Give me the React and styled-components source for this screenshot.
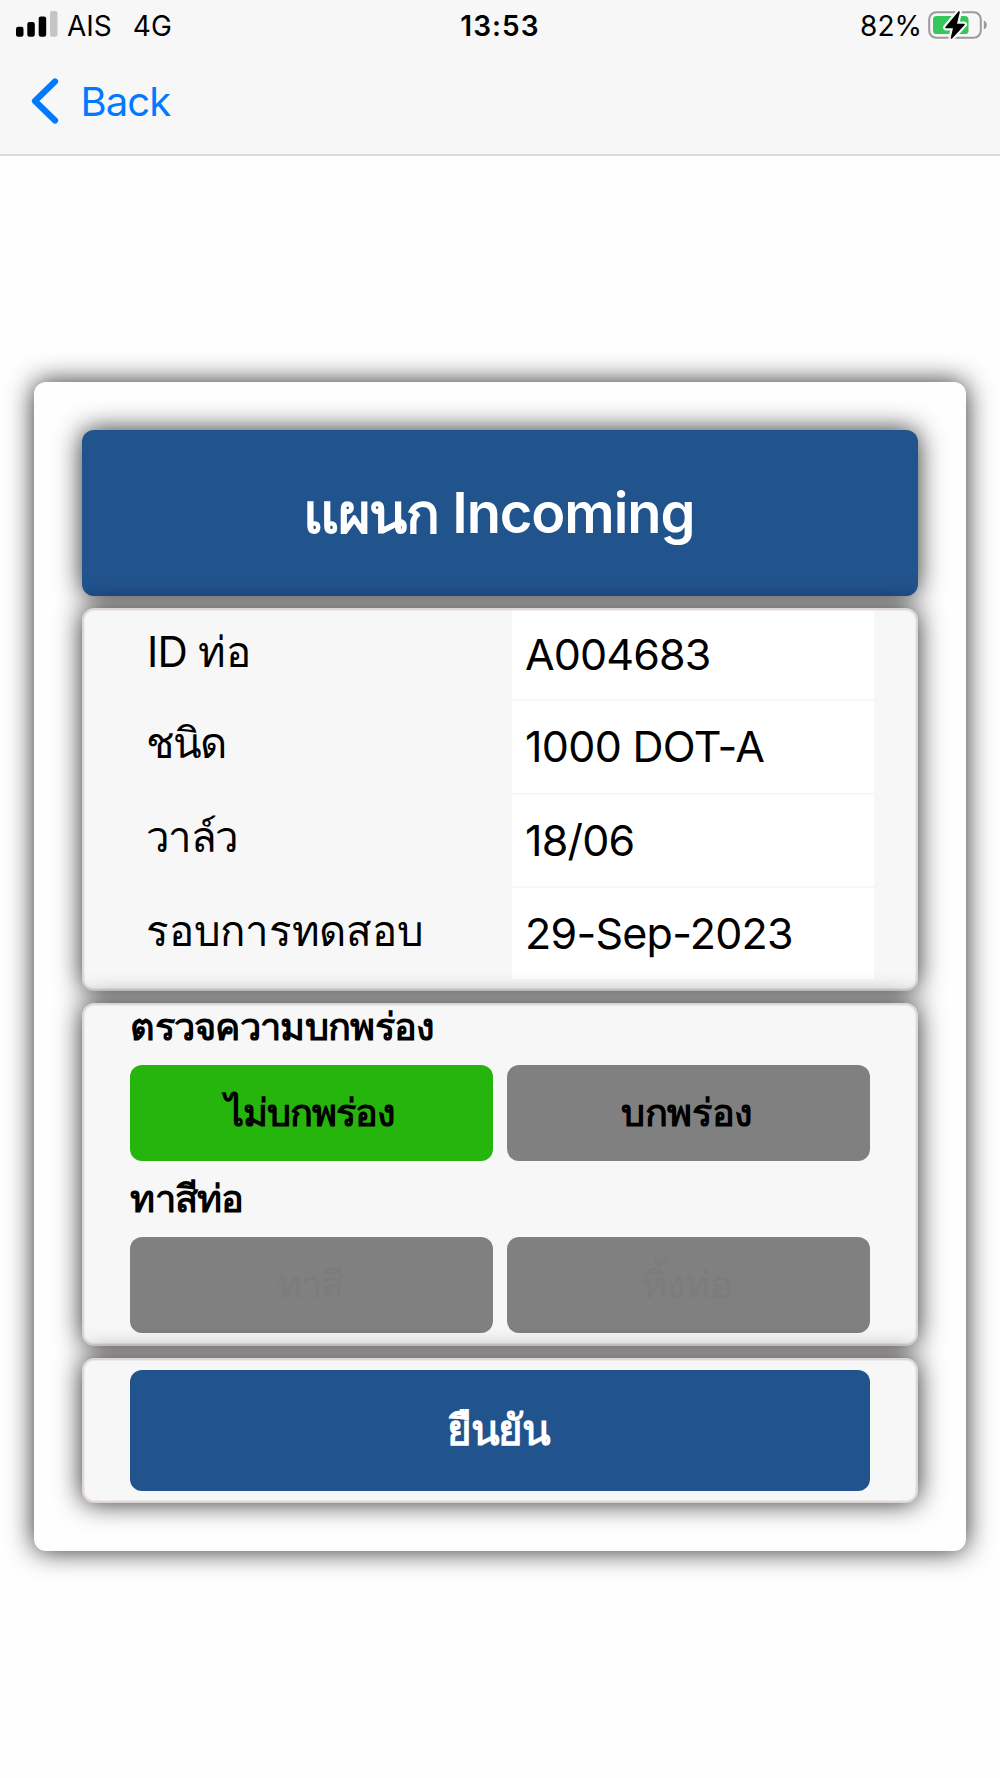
import React from "react";
import styled, { createGlobalStyle } from "styled-components";

const GlobalStyle = createGlobalStyle`
    * {
        box-sizing:border-box;
    }
    body {
        margin:0;
        background-color:#fefefe;
        font-family:Inter, "Noto Sans", sans-serif;
        color:#000;
    }
    `;

const shadow = "0 0 27px rgba(0,0,0,0.83)";

const Screen = styled.div`
    width:1000px;
    height:1778px;
    overflow:hidden;
    display:flex;
    flex-direction:column;
    background-color:#fefefe;
    `;
const Header = styled.header`
    height:156px;
    flex:none;
    background-color:#f7f7f7;
    border-bottom:2px solid #dadada;
    `;
const StatusBar = styled.div`
    height:52px;
    padding:0 13px 0 16px;
    display:grid;
    grid-template-columns:1fr auto 1fr;
    align-items:center;
    font-size:28px;
    line-height:52px;
    `;
const Carrier = styled.div`
    display:flex;
    align-items:center;
    svg {
        margin-bottom:4px;
    }
    `;
const CarrierText = styled.span`
    margin-left:${props=>props.$gap}px;
    `;
const Clock = styled.div`
    padding-right:3px;
    font-weight:600;
    letter-spacing:1.1px;
    `;
const Power = styled.div`
    display:flex;
    align-items:center;
    justify-content:flex-end;
    gap:6px;
    svg {
        margin-bottom:3px;
        overflow:visible;
    }
    `;
const BackButton = styled.button`
    height:98px;
    padding:0 0 0 30px;
    border:none;
    background:none;
    display:flex;
    align-items:center;
    gap:20.5px;
    color:#007aff;
    font-family:inherit;
    font-size:40px;
    line-height:100px;
    letter-spacing:-0.9px;
    span {
        padding-top:2px;
    }
    `;

const Card = styled.main`
    margin:226px 34px 0;
    padding:48px;
    display:flex;
    flex-direction:column;
    gap:12px;
    border-radius:12px;
    background-color:#fefefe;
    box-shadow:${shadow};
    `;
const Title = styled.h1`
    height:166px;
    margin:0;
    padding:1px 3px 0 0;
    display:flex;
    align-items:center;
    justify-content:center;
    border-radius:12px;
    background-color:#21538d;
    color:#fff;
    box-shadow:${shadow};
    font-size:56px;
    font-weight:600;
    letter-spacing:-1.1px;
    `;
const Panel = styled.section`
    position:relative;
    height:${props=>props.$height}px;
    padding:${props=>props.$padding};
    border:2px solid #ddd7d5;
    border-radius:12px;
    background-color:#f7f7f7;
    box-shadow:${shadow}, inset 0 0 0 1px #eeebea;
    `;
const Details = styled(Panel)`
    display:grid;
    grid-template-columns:366px 362px;
    grid-template-rows:88px 92px 91px 91px;
    row-gap:2px;
    `;
const Label = styled.div`
    font-size:42px;
    line-height:${props=>props.$line}px;
    letter-spacing:${props=>props.$spacing}px;
    text-indent:${props=>props.$indent || 0}px;
    white-space:nowrap;
    `;
const Value = styled.div`
    padding-left:13px;
    background-color:#fff;
    font-size:43px;
    line-height:${props=>props.$line}px;
    letter-spacing:${props=>props.$spacing}px;
    white-space:nowrap;
    `;
const SectionTitle = styled.h2`
    margin:0;
    height:${props=>props.$height}px;
    font-size:38px;
    font-weight:700;
    line-height:${props=>props.$line}px;
    letter-spacing:-0.7px;
    `;
const Choices = styled.div`
    display:grid;
    grid-template-columns:1fr 1fr;
    gap:14.5px;
    `;
const Choice = styled.button`
    height:96px;
    padding:0 3px 0 0;
    border:none;
    border-radius:12px;
    background-color:${props=>props.$active ? "#26b50c" : "#808080"};
    color:${props=>props.disabled ? "#7c7c7c" : "#000"};
    font-family:inherit;
    font-size:38px;
    font-weight:${props=>props.disabled ? 400 : 700};
    letter-spacing:${props=>props.$spacing}px;
    `;
const Confirm = styled.button`
    width:100%;
    height:120.5px;
    padding:0 3px 1px 0;
    border:none;
    border-radius:12px;
    background-color:#21538d;
    color:#fff;
    font-family:inherit;
    font-size:42px;
    font-weight:700;
    letter-spacing:-1.1px;
    `;

const Signal = () => (
  <svg width="42" height="26" viewBox="0 0 42 26">
    <rect x="0" y="15.8" width="7.5" height="10" rx="2.2" />
    <rect x="11.3" y="11" width="7.5" height="14.8" rx="2.2" />
    <rect x="22.7" y="5.4" width="7.5" height="20.4" rx="2.2" />
    <rect x="34" y="0" width="7.5" height="25.8" rx="2.2" fill="#c5c5c5" />
  </svg>
);

const Battery = () => (
  <svg width="59" height="32" viewBox="0 0 59 32">
    <rect x="1.2" y="3.2" width="51.6" height="25.6" rx="7.2" fill="none" stroke="#9b9b9b" strokeWidth="2" />
    <path d="M55.8 11.5c2 .8 3 2.6 3 4.5s-1 3.7-3 4.5z" fill="#9b9b9b" />
    <rect x="5" y="7" width="35.5" height="18" rx="3.6" fill="#35c759" />
    <path d="M31 3 18 18.5h8L23.5 29 36 15.5h-8z" stroke="#f7f7f7" strokeWidth="6" strokeLinejoin="round" />
    <path d="M31 3 18 18.5h8L23.5 29 36 15.5h-8z" stroke="#000" strokeWidth="1.6" strokeLinejoin="round" />
  </svg>
);

const Chevron = () => (
  <svg width="30" height="46" viewBox="0 0 30 46">
    <path d="M25 3.5 5 23l20 19.5" fill="none" stroke="#007aff" strokeWidth="6.2" strokeLinecap="round" strokeLinejoin="round" />
  </svg>
);

const details = [
  { label: "ID ท่อ", labelSpacing: -0.7, labelLine: 81, indent: 1, value: "A004683", valueSpacing: -0.85, valueLine: 86 },
  { label: "ชนิด", labelSpacing: -1.8, labelLine: 84, value: "1000 DOT-A", valueSpacing: -0.7, valueLine: 91 },
  { label: "วาล์ว", labelSpacing: -1.7, labelLine: 84, value: "18/06", valueSpacing: -0.8, valueLine: 90 },
  { label: "รอบการทดสอบ", labelSpacing: -0.25, labelLine: 85, value: "29-Sep-2023", valueSpacing: -0.75, valueLine: 91 },
];

const App = () => {
  return (
    <Screen>
        <GlobalStyle/>
        <Header>
            <StatusBar>
                <Carrier>
                    <Signal/>
                    <CarrierText $gap={9}>AIS</CarrierText>
                    <CarrierText $gap={21}>4G</CarrierText>
                </Carrier>
                <Clock>13:53</Clock>
                <Power>
                    <span>82%</span>
                    <Battery/>
                </Power>
            </StatusBar>
            <BackButton>
                <Chevron/>
                <span>Back</span>
            </BackButton>
        </Header>
        <Card>
            <Title>แผนก Incoming</Title>
            <Details $height={383} $padding="1px 0 0 62px">
                {details.map((item)=>(
                    <React.Fragment key={item.label}>
                        <Label $spacing={item.labelSpacing} $line={item.labelLine} $indent={item.indent}>{item.label}</Label>
                        <Value $spacing={item.valueSpacing} $line={item.valueLine}>{item.value}</Value>
                    </React.Fragment>
                ))}
            </Details>
            <Panel $height={343} $padding="1px 46.25px">
                <SectionTitle $height={58.5} $line={41}>ตรวจความบกพร่อง</SectionTitle>
                <Choices>
                    <Choice $active $spacing={-0.9}>ไม่บกพร่อง</Choice>
                    <Choice $spacing={-0.4}>บกพร่อง</Choice>
                </Choices>
                <SectionTitle $height={76} $line={75}>ทาสีท่อ</SectionTitle>
                <Choices>
                    <Choice disabled $spacing={-1}>ทาสี</Choice>
                    <Choice disabled $spacing={-0.5}>ทิ้งท่อ</Choice>
                </Choices>
            </Panel>
            <Panel $height={145} $padding="10px 46.25px">
                <Confirm>ยืนยัน</Confirm>
            </Panel>
        </Card>
    </Screen>
  )
}
export default App;
